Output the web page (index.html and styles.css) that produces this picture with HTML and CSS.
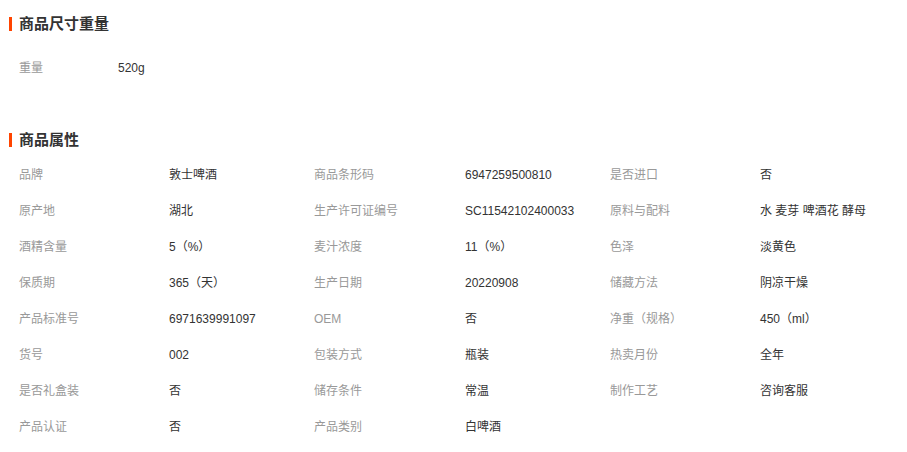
FILE: index.html
```html
<!DOCTYPE html>
<html lang="zh-CN">
<head>
    <meta charset="UTF-8">
    <title>商品参数</title>
    <link rel="stylesheet" href="styles.css">
</head>
<body>
    <div class="page">
        <h2 class="title">商品尺寸重量</h2>
        <div class="dims">
            <span class="label">重量</span>
            <span class="value">520g</span>
        </div>

        <h2 class="title title-attr">商品属性</h2>
        <div class="attrs">
            <span class="label">品牌</span><span class="value">敦士啤酒</span>
            <span class="label">商品条形码</span><span class="value">6947259500810</span>
            <span class="label">是否进口</span><span class="value">否</span>

            <span class="label">原产地</span><span class="value">湖北</span>
            <span class="label">生产许可证编号</span><span class="value">SC11542102400033</span>
            <span class="label">原料与配料</span><span class="value">水 麦芽 啤酒花 酵母</span>

            <span class="label">酒精含量</span><span class="value">5（%）</span>
            <span class="label">麦汁浓度</span><span class="value">11（%）</span>
            <span class="label">色泽</span><span class="value">淡黄色</span>

            <span class="label">保质期</span><span class="value">365（天）</span>
            <span class="label">生产日期</span><span class="value">20220908</span>
            <span class="label">储藏方法</span><span class="value">阴凉干燥</span>

            <span class="label">产品标准号</span><span class="value">6971639991097</span>
            <span class="label">OEM</span><span class="value">否</span>
            <span class="label">净重（规格）</span><span class="value">450（ml）</span>

            <span class="label">货号</span><span class="value">002</span>
            <span class="label">包装方式</span><span class="value">瓶装</span>
            <span class="label">热卖月份</span><span class="value">全年</span>

            <span class="label">是否礼盒装</span><span class="value">否</span>
            <span class="label">储存条件</span><span class="value">常温</span>
            <span class="label">制作工艺</span><span class="value">咨询客服</span>

            <span class="label">产品认证</span><span class="value">否</span>
            <span class="label">产品类别</span><span class="value">白啤酒</span>
        </div>
    </div>
</body>
</html>
```

FILE: styles.css
```css
* { box-sizing: border-box; }
body {
    margin: 0;
    background: #fff;
    color: #333;
    font-family: "Liberation Sans", "Noto Sans CJK SC", sans-serif;
    font-size: 12px;
}
.page {
    padding-top: 17px;
}
.title {
    margin: 0 0 0 9px;
    padding-left: 7px;
    border-left: 3px solid #ff4400;
    height: 14px;
    line-height: 14px;
    font-size: 15px;
    font-weight: bold;
    color: #333;
}
.title-attr {
    margin-top: 47px;
}
.dims {
    display: grid;
    grid-template-columns: 99px auto;
    padding-left: 19px;
    margin-top: 19px;
    line-height: 36px;
}
.attrs {
    display: grid;
    grid-template-columns: 150px 145px 151px 145px 150px 1fr;
    padding-left: 19px;
    margin-top: 10px;
    line-height: 36px;
}
.label {
    color: #999;
}
.value {
    color: #333;
}
```
